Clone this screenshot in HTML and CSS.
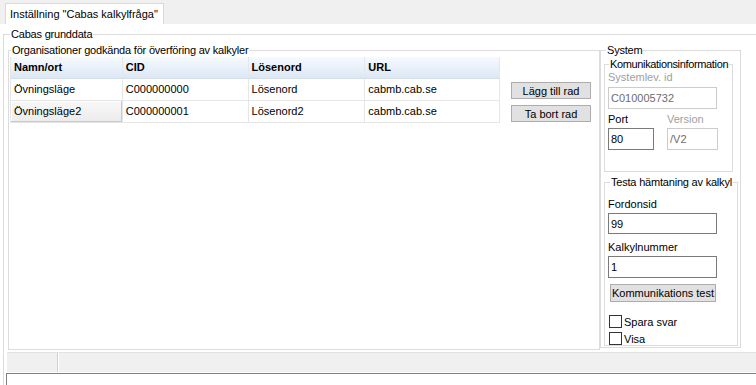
FILE: index.html
```html
<!DOCTYPE html>
<html lang="sv">
<head>
  <meta charset="UTF-8" />
  <title>Inställning Cabas kalkylfråga</title>
  <link rel="stylesheet" href="styles.css">
</head>
<body>
  <div class="tabstrip">
    <div class="tab">Inställning "Cabas kalkylfråga"</div>
  </div>

  <div class="page">
    <fieldset class="group outer">
      <legend>Cabas grunddata</legend>
      <div class="cols">
        <fieldset class="group org">
          <legend>Organisationer godkända för överföring av kalkyler</legend>
          <div class="org-body">
            <table class="grid">
              <thead>
                <tr>
                  <th class="c-name">Namn/ort</th>
                  <th class="c-cid">CID</th>
                  <th class="c-pw">Lösenord</th>
                  <th class="c-url">URL</th>
                </tr>
              </thead>
              <tbody>
                <tr>
                  <td>Övningsläge</td>
                  <td>C000000000</td>
                  <td>Lösenord</td>
                  <td>cabmb.cab.se</td>
                </tr>
                <tr>
                  <td class="current">Övningsläge2</td>
                  <td>C000000001</td>
                  <td>Lösenord2</td>
                  <td>cabmb.cab.se</td>
                </tr>
              </tbody>
            </table>
            <div class="row-buttons">
              <button class="btn">Lägg till rad</button>
              <button class="btn">Ta bort rad</button>
            </div>
          </div>
        </fieldset>

        <fieldset class="group system">
          <legend>System</legend>
          <fieldset class="group sub kominfo">
            <legend>Komunikationsinformation</legend>
            <div class="label disabled">Systemlev. id</div>
            <input class="field wide" type="text" value="C010005732" disabled>
            <div class="port-row">
              <div class="port">
                <div class="label">Port</div>
                <input class="field port-field" type="text" value="80">
              </div>
              <div class="version">
                <div class="label disabled">Version</div>
                <input class="field version-field" type="text" value="/V2" disabled>
              </div>
            </div>
          </fieldset>
          <fieldset class="group sub testa">
            <legend>Testa hämtaning av kalkyl</legend>
            <div class="label first">Fordonsid</div>
            <input class="field wide" type="text" value="99">
            <div class="label second">Kalkylnummer</div>
            <input class="field wide" type="text" value="1">
            <button class="btn test-btn">Kommunikations test</button>
            <label class="check first-check"><span class="box"></span>Spara svar</label>
            <label class="check"><span class="box"></span>Visa</label>
          </fieldset>
        </fieldset>
      </div>

      <div class="statusbar">
        <div class="status-cell first"></div>
        <div class="status-cell"></div>
      </div>
      <div class="log"></div>
    </fieldset>
  </div>
</body>
</html>
```

FILE: styles.css
```css
body {
  margin: 0;
  width: 756px;
  height: 385px;
  overflow: hidden;
  background-color: #FFFFFF;
  color: #000000;
  font-family: 'Liberation Sans', Arial, sans-serif;
  font-size: 11px;
}
.tabstrip {
  height: 24px;
  background-color: #F0F0F0;
  display: flex;
  align-items: flex-end;
  padding-left: 5px;
  box-sizing: border-box;
}
.tab {
  height: 21px;
  line-height: 20px;
  padding: 0 5px 0 4px;
  background-color: #FFFFFF;
  border: 1px solid #D9D9D9;
  border-bottom: none;
  box-sizing: border-box;
}
.page {
  padding: 4px 0 0 3px;
  height: 357px;
  overflow: hidden;
}
fieldset.group {
  margin: 0;
  padding: 0;
  min-width: 0;
  border: 1px solid #DCDCDC;
}
fieldset.group > legend {
  padding: 0 1px;
  margin-left: 2px;
  line-height: 13px;
  white-space: nowrap;
  letter-spacing: -0.2px;
}
fieldset.kominfo > legend {
  margin-left: 1px;
  letter-spacing: -0.35px;
}
.outer {
  width: 760px;
  height: 400px;
  padding: 3px 0 0 4px !important;
  box-sizing: border-box;
}
.cols {
  display: flex;
  align-items: flex-start;
  height: 306px;
}
.org {
  width: 592px;
  height: 306px;
  box-sizing: border-box;
}
.org-body {
  display: flex;
  align-items: flex-start;
  padding-left: 1px;
}
.grid {
  border-collapse: collapse;
  width: 490px;
  border-left: 1px solid #E6E6E6;
}
.grid th {
  height: 21px;
  padding: 0 0 0 3px;
  text-align: left;
  font-weight: bold;
  background: linear-gradient(#F6FAFE, #DCE7F4);
  border-right: 1px solid #E3E8EE;
  border-bottom: 1px solid #D5DFEA;
  box-sizing: border-box;
}
.grid td {
  height: 22px;
  padding: 0 0 0 3px;
  border-right: 1px solid #E6E6E6;
  border-bottom: 1px solid #E6E6E6;
  box-sizing: border-box;
}
.grid td.current {
  background: linear-gradient(#F8F8F8, #ECECEC);
  box-shadow: inset -1px -1px 0 #C9C9C9, inset 1px 1px 0 #FFFFFF;
}
.c-name { width: 112px; }
.c-cid { width: 126px; }
.c-pw { width: 117px; }
.c-url { width: 135px; }
.row-buttons {
  display: flex;
  flex-direction: column;
  gap: 6px;
  margin: 25px 0 0 11px;
}
.btn {
  font-family: inherit;
  font-size: 11px;
  color: #000000;
  background-color: #E1E1E1;
  border: 1px solid #ADADAD;
  padding: 0;
  box-sizing: border-box;
}
.row-buttons .btn {
  width: 80px;
  height: 17px;
}
.system {
  width: 141px;
  height: 304px;
  margin-left: 1px;
  margin-top: 1px;
  padding: 1px 3px 0 3px !important;
  box-sizing: border-box;
}
.sub {
  display: flex;
  flex-direction: column;
  align-items: flex-start;
  padding: 0 0 0 3px !important;
  box-sizing: border-box;
}
.kominfo {
  height: 114px;
  width: 129px;
}
.testa {
  margin-top: 4px !important;
  height: 170px;
  width: 134px;
}
.label {
  line-height: 13px;
}
.label.disabled {
  color: #A0A0A0;
}
.field {
  font-family: inherit;
  font-size: 11px;
  height: 22px;
  margin: 2px 0 0 0;
  padding: 0 0 0 2px;
  border: 1px solid #7A7A7A;
  background-color: #FFFFFF;
  color: #000000;
  box-sizing: border-box;
  outline: none;
}
.field:disabled {
  border-color: #CCCCCC;
  color: #6D6D6D;
  background-color: #FFFFFF;
}
.wide {
  width: 109px;
}
.kominfo .wide {
  margin-top: 3px;
}
.port-row {
  display: flex;
  gap: 13px;
  margin-top: 4px;
}
.port-field {
  width: 46px;
}
.version-field {
  width: 51px;
}
.testa .label.first {
  margin-top: 9px;
}
.testa .label.second {
  margin-top: 7px;
}
.test-btn {
  width: 106px;
  height: 19px;
  margin: 6px 0 0 2px;
}
.check {
  display: flex;
  align-items: center;
  height: 13px;
  margin-top: 4px;
  margin-left: 1px;
}
.check.first-check {
  margin-top: 13px;
}
.box {
  width: 13px;
  height: 13px;
  border: 1px solid #333333;
  background-color: #FFFFFF;
  box-sizing: border-box;
  margin-right: 2px;
}
.statusbar {
  display: flex;
  height: 20px;
  margin-top: 2px;
  margin-left: -1px;
  background-color: #F0F0F0;
  border-top: 1px solid #E3E3E3;
  box-sizing: border-box;
}
.status-cell.first {
  width: 50px;
  border-right: 1px solid #D0D0D0;
  box-shadow: 1px 0 0 #FFFFFF;
}
.log {
  height: 30px;
  margin-top: 1px;
  margin-left: -2px;
  border-top: 1px solid #808080;
  border-left: 1px solid #808080;
}
```
